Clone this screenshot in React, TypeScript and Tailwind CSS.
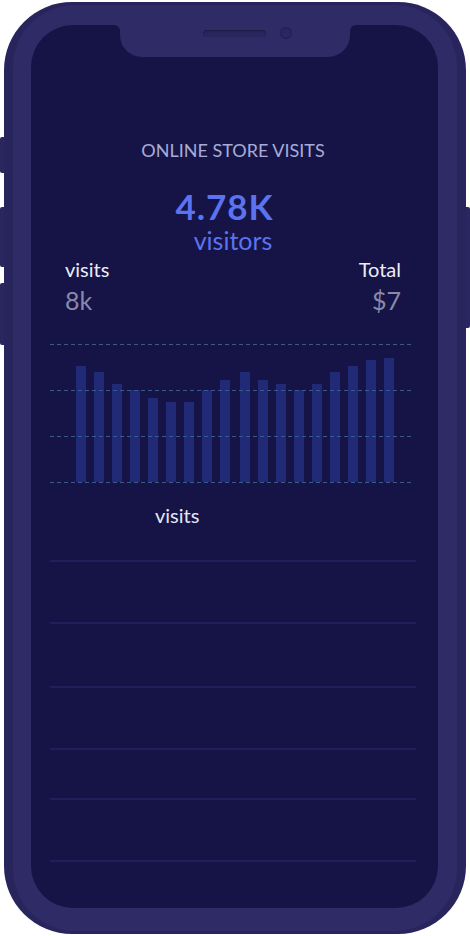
const bars = [366, 372, 384, 390, 398, 402, 402, 390, 380, 372, 380, 384, 390, 384, 372, 366, 360, 358];
const barX = [26, 44, 62, 80, 98, 116, 134, 152, 170, 190, 208, 226, 244, 262, 280, 298, 316, 334];

export default function App() {
  return (
    <div
      className="relative w-[470px] h-[936px] bg-white px-[4px] py-[2px]"
      style={{ fontFamily: "Lato, 'Open Sans', sans-serif" }}
    >
      {/* side buttons */}
      <div className="absolute left-0 top-[137px] w-[6px] h-[36px] rounded-l-[2px] bg-[#2a2760]" />
      <div className="absolute left-0 top-[207px] w-[6px] h-[60px] rounded-l-[2px] bg-[#2a2760]" />
      <div className="absolute left-0 top-[283px] w-[6px] h-[62px] rounded-l-[2px] bg-[#2a2760]" />
      <div className="absolute right-0 top-[207px] w-[6px] h-[121px] rounded-r-[2px] bg-[#2a2760]" />

      {/* phone body */}
      <div className="relative h-full w-full rounded-[68px] bg-[#28255d] px-[9px] py-[3px]">
        <div className="h-full w-full rounded-[62px] bg-[#2e2b66] pl-[18px] pr-[19px] pt-[20px] pb-[23px]">
          <div className="relative h-full w-full rounded-[42px] bg-[#161446] overflow-hidden">
            {/* notch */}
            <div className="absolute left-[89px] top-0 w-[230px] h-[32px] rounded-b-[22px] bg-[#2e2b66]">
              <div className="absolute -left-[6px] top-0 w-[6px] h-[6px] bg-[#2e2b66]">
                <div className="w-full h-full rounded-tr-[6px] bg-[#161446]" />
              </div>
              <div className="absolute -right-[6px] top-0 w-[6px] h-[6px] bg-[#2e2b66]">
                <div className="w-full h-full rounded-tl-[6px] bg-[#161446]" />
              </div>
              <div className="absolute left-[83px] top-[5px] w-[63px] h-[7px] rounded-full bg-[#29265f] shadow-[inset_0_1px_2px_rgba(0,0,0,0.35)]" />
              <div className="absolute left-[160px] top-[2px] w-[12px] h-[12px] rounded-full bg-[#2a2761] shadow-[inset_0_0_2px_rgba(0,0,0,0.45)]" />
            </div>

            <div className="flex flex-col pt-[115px] pl-[19px] pr-[22px]">
              <div className="text-center text-[18px] leading-[20px] text-[#a7acd6]">ONLINE STORE VISITS</div>
              <div className="mt-[26px] pr-[17px] text-center text-[35px] leading-[40px] font-bold tracking-[1px] text-[#5b73f0]">4.78K</div>
              <div className="text-center text-[25px] leading-[28px] text-[#5b73f0]">visitors</div>

              <div className="mt-[3px] flex justify-between px-[15px] text-[20px] leading-[24px] text-[#ececf5]">
                <span>visits</span>
                <span>Total</span>
              </div>
              <div className="mt-[5px] flex justify-between px-[15px] text-[25px] leading-[28px] text-[#8b88a9]">
                <span>8k</span>
                <span>$7</span>
              </div>

              <svg className="mt-[26px] block" width="366" height="146" viewBox="0 0 366 146">
                {barX.map((x, i) => (
                  <rect key={i} x={x} y={bars[i] - 340} width="10" height={482 - bars[i]} fill="#212a76" />
                ))}
                {[4, 50, 96, 142].map((y) => (
                  <line key={y} x1="0" x2="364" y1={y + 0.5} y2={y + 0.5} stroke="#3a5a8c" strokeWidth="1" strokeDasharray="4 3" />
                ))}
              </svg>

              <div className="mt-[17px] pl-[105px] text-[20px] leading-[24px] text-[#e6e6f2]">visits</div>

              <div className="mt-[33px] h-[2px] w-[366px] bg-[#221e59]" />
              <div className="mt-[60px] h-[2px] w-[366px] bg-[#221e59]" />
              <div className="mt-[62px] h-[2px] w-[366px] bg-[#221e59]" />
              <div className="mt-[60px] h-[2px] w-[366px] bg-[#221e59]" />
              <div className="mt-[48px] h-[2px] w-[366px] bg-[#221e59]" />
              <div className="mt-[60px] h-[2px] w-[366px] bg-[#221e59]" />
            </div>
          </div>
        </div>
      </div>
    </div>
  );
}
